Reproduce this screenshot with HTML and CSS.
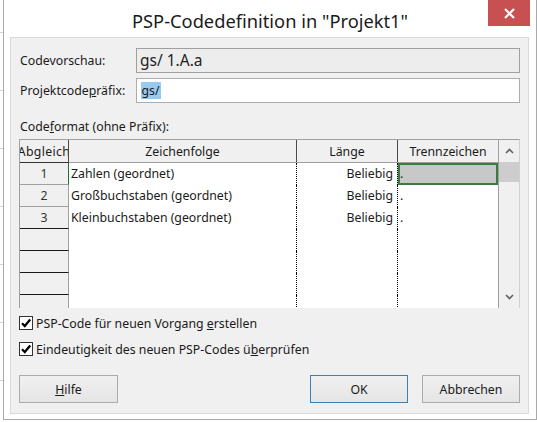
FILE: index.html
```html
<!DOCTYPE html>
<html lang="de">
<head>
<meta charset="utf-8">
<title>PSP-Codedefinition</title>
<link rel="stylesheet" href="styles.css">
</head>
<body>
<div class="desk">
  <div class="window">
    <div class="titlebar">
      <div class="title">PSP-Codedefinition in "Projekt1"</div>
      <div class="close">
        <svg width="11" height="11" viewBox="0 0 11 11"><path d="M1 1 L10 10 M10 1 L1 10" stroke="#fff" stroke-width="2.2" fill="none"/></svg>
      </div>
    </div>
    <div class="panel">
      <div class="field-row">
        <span class="label">Codevorschau:</span>
        <div class="preview">gs/ 1.A.a</div>
      </div>
      <div class="field-row row2">
        <span class="label">Projektcode<u>p</u>räfix:</span>
        <div class="input"><span class="sel">gs/</span></div>
      </div>
      <div class="section-label">Code<u>f</u>ormat (ohne Präfix):</div>
      <div class="grid">
        <div class="sheet">
          <div class="head">
            <div class="hc c-num"><span>Abgleich</span></div>
            <div class="hc c-seq">Zeichenfolge</div>
            <div class="hc c-len">Länge</div>
            <div class="hc c-sep">Trennzeichen</div>
          </div>
          <div class="body">
            <div class="r">
              <div class="n n-light n-active">1</div>
              <div class="s">Zahlen (geordnet)</div>
              <div class="l">Beliebig</div>
              <div class="t t-sel">.</div>
            </div>
            <div class="r">
              <div class="n n-light">2</div>
              <div class="s">Großbuchstaben (geordnet)</div>
              <div class="l">Beliebig</div>
              <div class="t">.</div>
            </div>
            <div class="r">
              <div class="n">3</div>
              <div class="s">Kleinbuchstaben (geordnet)</div>
              <div class="l">Beliebig</div>
              <div class="t">.</div>
            </div>
            <div class="r"><div class="n"></div><div class="s"></div><div class="l"></div><div class="t"></div></div>
            <div class="r"><div class="n"></div><div class="s"></div><div class="l"></div><div class="t"></div></div>
            <div class="r"><div class="n"></div><div class="s"></div><div class="l"></div><div class="t"></div></div>
            <div class="r"><div class="n"></div><div class="s"></div><div class="l"></div><div class="t"></div></div>
          </div>
        </div>
        <div class="scroll">
          <div class="arrow">
            <svg width="9" height="6" viewBox="0 0 9 6"><path d="M1 5 L4.5 1.5 L8 5" stroke="#606060" stroke-width="1.6" fill="none"/></svg>
          </div>
          <div class="thumb"></div>
          <div class="track"></div>
          <div class="arrow">
            <svg width="9" height="6" viewBox="0 0 9 6"><path d="M1 1 L4.5 4.5 L8 1" stroke="#606060" stroke-width="1.6" fill="none"/></svg>
          </div>
        </div>
      </div>
      <div class="checks">
        <label class="check">
          <span class="box"><svg width="12" height="12" viewBox="0 0 12 12"><path d="M2 6.2 L4.8 9 L10.2 2.6" stroke="#000" stroke-width="2.3" fill="none"/></svg></span>
          <span>PSP-Code für neuen Vorgang <u>e</u>rstellen</span>
        </label>
        <label class="check">
          <span class="box"><svg width="12" height="12" viewBox="0 0 12 12"><path d="M2 6.2 L4.8 9 L10.2 2.6" stroke="#000" stroke-width="2.3" fill="none"/></svg></span>
          <span>Eindeutigkeit des neuen PSP-Codes ü<u>b</u>erprüfen</span>
        </label>
      </div>
      <div class="buttons">
        <div class="btn"><u>H</u>ilfe</div>
        <div class="spacer"></div>
        <div class="btn btn-default">OK</div>
        <div class="btn">Abbrechen</div>
      </div>
    </div>
  </div>
</div>
</body>
</html>
```

FILE: styles.css
```css
* { box-sizing: border-box; }
html, body { margin: 0; padding: 0; }
body {
  width: 537px;
  height: 422px;
  overflow: hidden;
  font-family: "Noto Sans", "Open Sans", sans-serif;
  font-size: 12.3px;
  color: #1a1a1a;
  background-color: #fff;
  background-image: repeating-linear-gradient(to bottom, transparent 0, transparent 32px, #d6d6d6 32px, #d6d6d6 33px, transparent 33px, transparent 58px);
  background-size: 3px 100%;
  background-repeat: no-repeat;
}
.desk { padding-left: 3px; }
.window {
  width: 534px;
  height: 420px;
  background: #fff;
  border: 1px solid #a9a9a9;
  border-top: none;
}
.titlebar {
  height: 37px;
  display: flex;
  align-items: flex-start;
  justify-content: center;
  position: relative;
}
.title {
  font-size: 18.3px;
  line-height: 26px;
  padding-top: 8px;
  color: #1b1b1b;
}
.close {
  position: absolute;
  top: 0;
  right: 6px;
  width: 42px;
  height: 26px;
  background: #c75050;
  display: flex;
  align-items: center;
  justify-content: center;
}
.panel {
  margin-left: 6px;
  width: 519px;
  height: 377px;
  background: #f0f0f0;
  border: 1px solid #dadada;
  padding: 10px 8px 0 8px;
  display: flex;
  flex-direction: column;
}
.field-row {
  display: flex;
  align-items: center;
  height: 25px;
}
.row2 { margin-top: 5px; }
.label {
  width: 117px;
  padding-left: 1px;
}
.preview {
  width: 384px;
  height: 25px;
  border: 1px solid #a0a0a0;
  background: #ededed;
  font-size: 15.5px;
  line-height: 23px;
  padding-left: 3px;
  color: #222;
}
.input {
  width: 386px;
  height: 25px;
  border: 1px solid #abadb3;
  background: #fff;
  padding: 3px 0 0 4px;
  display: flex;
}
.sel {
  background: #99c9ef;
  height: 17px;
  line-height: 17px;
  padding: 0 1px;
}
.section-label {
  margin-top: 16px;
  height: 16px;
  line-height: 16px;
  padding-left: 1px;
}
.grid {
  margin-top: 4px;
  width: 501px;
  height: 169px;
  border: 1px solid #a0a0a0;
  border-bottom: none;
  border-right-color: #d0d0d0;
  display: flex;
}
.sheet {
  width: 478px;
  display: flex;
  flex-direction: column;
}
.head {
  height: 23px;
  display: flex;
  border-bottom: 1px solid #a0a0a0;
}
.hc {
  height: 22px;
  display: flex;
  align-items: center;
  justify-content: center;
  border-right: 1px solid #4a4a4a;
  overflow: hidden;
  white-space: nowrap;
}
.c-num { width: 49px; border-bottom: 1px solid #333; height: 23px; margin-bottom: -1px; }
.c-num span { flex: none; letter-spacing: 0.35px; }
.c-seq { width: 228px; }
.c-len { width: 101px; }
.c-sep { width: 100px; border-right: none; }
.body {
  height: 145px;
  overflow: hidden;
  background: #fff;
}
.r {
  display: flex;
  height: 22px;
}
.n {
  width: 49px;
  flex: none;
  background: #f0f0f0;
  border-right: 1px solid #a0a0a0;
  border-bottom: 1px solid #1a1a1a;
  text-align: center;
  line-height: 21px;
  color: #333;
}
.n-light { border-bottom-color: #a0a0a0; }
.n-active { border-right: 1px solid #217346; }
.s {
  width: 227px;
  flex: none;
  padding-left: 2px;
  line-height: 21px;
  white-space: nowrap;
}
.l {
  width: 101px;
  flex: none;
  border-left: 1px dotted #000;
  text-align: right;
  padding-right: 4px;
  line-height: 21px;
}
.t {
  width: 101px;
  flex: none;
  border-left: 1px dotted #000;
  padding-left: 2px;
  line-height: 21px;
}
.t-sel {
  background: #c8c8c8;
  box-shadow: inset 0 0 0 2px #3b7a40;
}
.scroll {
  width: 21px;
  border-left: 1px solid #a0a0a0;
  background: #f0f0f0;
  display: flex;
  flex-direction: column;
}
.arrow {
  height: 22px;
  display: flex;
  align-items: center;
  justify-content: center;
}
.thumb {
  height: 20px;
  background: #cdcdcd;
}
.track { flex: 1; }
.checks {
  margin-top: 5px;
  display: flex;
  flex-direction: column;
  gap: 6px;
}
.check {
  display: flex;
  align-items: center;
  height: 20px;
}
.box {
  width: 14px;
  height: 14px;
  border: 1px solid #333;
  background: #fff;
  margin-right: 3px;
  display: flex;
  align-items: center;
  justify-content: center;
}
.buttons {
  margin-top: 16px;
  display: flex;
  height: 28px;
}
.spacer { flex: 1; }
.btn {
  width: 98px;
  height: 28px;
  border: 1px solid #acacac;
  background: linear-gradient(#f0f0f0, #e5e5e5);
  display: flex;
  align-items: center;
  justify-content: center;
}
.btn:first-child { width: 99px; }
.btn-default {
  border-color: #3c7fb1;
  margin-right: 14px;
}
```
